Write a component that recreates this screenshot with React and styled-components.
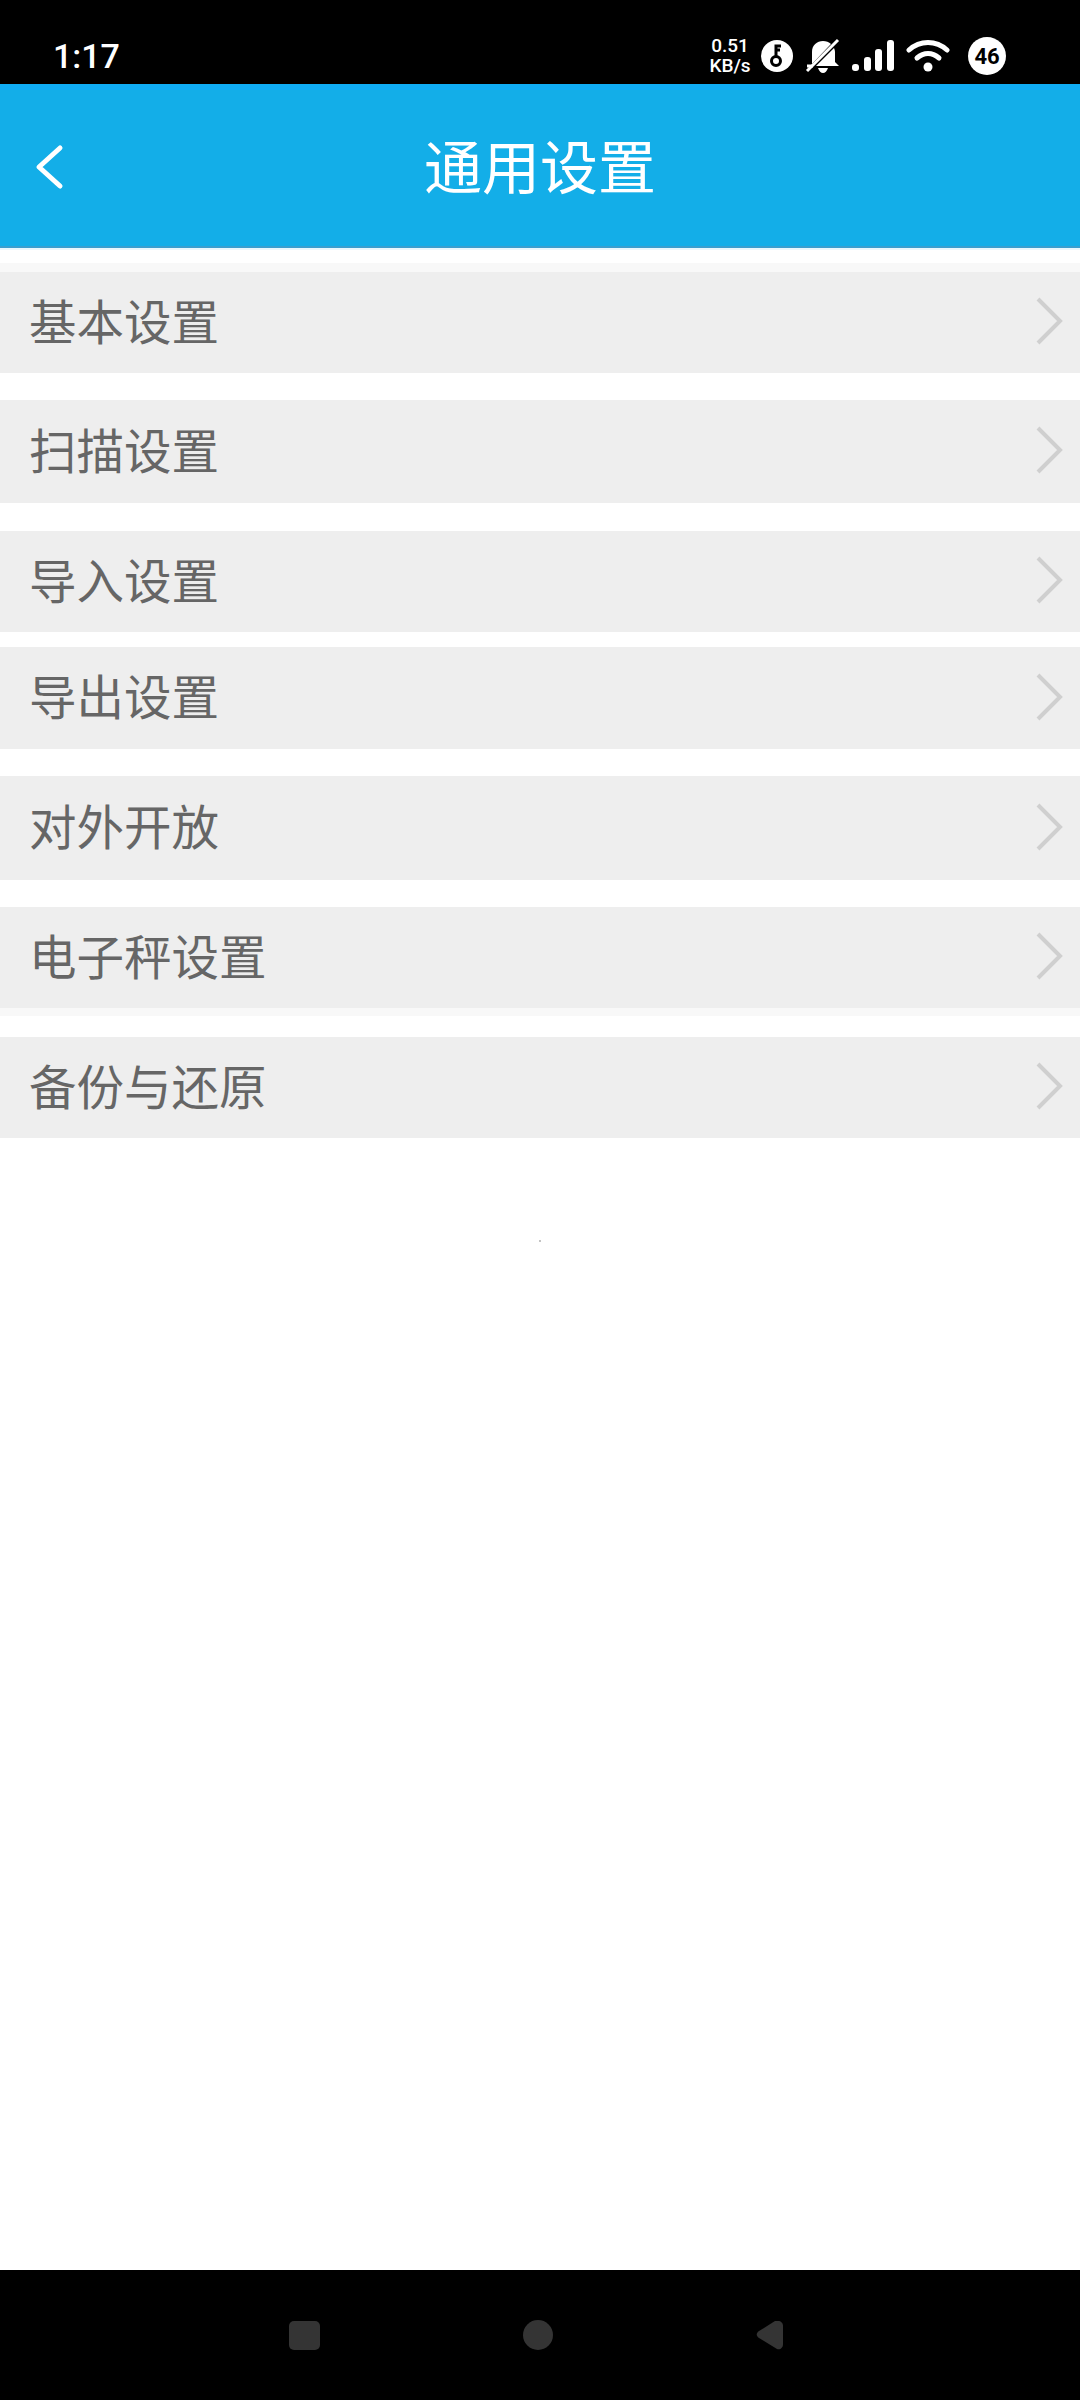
import React from 'react';
import styled, { createGlobalStyle } from 'styled-components';

const GlobalStyle = createGlobalStyle`
  html, body {
    margin: 0;
    padding: 0;
    background: #fff;
  }
  body {
    font-family: "Noto Sans CJK SC", Roboto, sans-serif;
  }
`;

const Page = styled.div`
  width: 1080px;
  height: 2400px;
  display: flex;
  flex-direction: column;
  background: #fff;
  overflow: hidden;
`;

const StatusBar = styled.div`
  height: 84px;
  flex: none;
  background: #000;
  color: #fff;
  display: flex;
  align-items: center;
  justify-content: space-between;
  padding: 28px 74px 0 53px;
  box-sizing: border-box;
  font-family: Roboto, sans-serif;
`;

const Clock = styled.span`
  font-size: 34px;
  font-weight: 500;
  line-height: 1;
`;

const StatusIcons = styled.div`
  display: flex;
  align-items: center;
  height: 44px;
`;

const NetSpeed = styled.div`
  font-size: 19px;
  font-weight: 500;
  line-height: 20px;
  text-align: center;
  width: 44px;
  margin-right: 9px;
`;

const BatteryBadge = styled.div`
  width: 38px;
  height: 38px;
  border-radius: 50%;
  background: #fff;
  color: #000;
  font-size: 22px;
  font-weight: 700;
  display: flex;
  align-items: center;
  justify-content: center;
  margin-left: 18px;
`;

const Glyph = styled.svg`
  display: block;
  flex: none;
  margin-left: ${({ $gap }) => $gap || 0}px;
`;

const Header = styled.header`
  height: 164px;
  flex: none;
  box-sizing: border-box;
  background: #13aee8;
  border-top: 6px solid #10aef6;
  border-bottom: 2px solid #3a9fcf;
  display: grid;
  grid-template-columns: 1fr auto 1fr;
  align-items: center;
  color: #fff;
`;

const BackButton = styled.div`
  padding-left: 32px;
`;

const Title = styled.h1`
  margin: 0 0 9px;
  font-size: 58px;
  font-weight: 400;
  line-height: 1;
`;

const List = styled.div`
  flex: 1;
  padding-top: 22px;
  border-top: 2px solid #e9f8fd;
  position: relative;
`;

const Row = styled.div`
  height: ${({ $height }) => $height}px;
  margin-top: ${({ $gap }) => $gap}px;
  background: #eeeeee;
  display: flex;
  align-items: center;
  justify-content: space-between;
  padding: 0 16px 3px 29px;
  box-sizing: border-box;
  box-shadow: ${({ $haze }) => $haze || 'none'};
`;

const RowLabel = styled.span`
  font-size: 47.5px;
  line-height: 1;
  color: #666666;
  margin-bottom: 3px;
`;

const Speck = styled.div`
  position: absolute;
  left: 539px;
  top: 990px;
  width: 2px;
  height: 2px;
  background: #c4c4c4;
`;

const NavBar = styled.div`
  height: 131px;
  flex: none;
  background: #000;
  display: flex;
  align-items: center;
  gap: 203px;
  padding-left: 289px;
  box-sizing: border-box;
  border-top: 1px solid #fff;
`;

const rows = [
  { label: '基本设置', gap: 0, height: 101, haze: '0 -9px 0 #f8f8f8' },
  { label: '扫描设置', gap: 27, height: 103 },
  { label: '导入设置', gap: 28, height: 101 },
  { label: '导出设置', gap: 15, height: 102 },
  { label: '对外开放', gap: 27, height: 104 },
  { label: '电子秤设置', gap: 27, height: 101, haze: '0 8px 0 #f8f8f8' },
  { label: '备份与还原', gap: 29, height: 101 },
];

const Chevron = () => (
  <Glyph width="30" height="50" viewBox="0 0 30 50" fill="none">
    <path d="M4 3l22 22L4 47" stroke="#cfcfcf" strokeWidth="4" />
  </Glyph>
);

const App = () => (
  <Page>
    <GlobalStyle />
    <StatusBar>
      <Clock>1:17</Clock>
      <StatusIcons>
        <NetSpeed>
          0.51
          <br />
          KB/s
        </NetSpeed>
        <Glyph width="32" height="32" viewBox="0 0 32 32">
          <circle cx="16" cy="16" r="16" fill="#fff" />
          <circle cx="15" cy="21" r="4.5" fill="none" stroke="#000" strokeWidth="3" />
          <path d="M15 17V6h5M15 10h4" fill="none" stroke="#000" strokeWidth="3" />
        </Glyph>
        <Glyph $gap={11} width="38" height="36" viewBox="0 0 38 36">
          <path d="M8 24V14C8 7 13 3 19 3c3 0 6 1 8 3L8 26zM12 28L30 10c.6 1.300 1 2.600 1 4v10l4 4zM14 30h10c-1 3-3 5-5 5s-4-2-5-5z" fill="#fff" />
          <path d="M3 33L34 2" stroke="#fff" strokeWidth="3" />
          <path d="M3 28h6" stroke="#fff" strokeWidth="3" />
        </Glyph>
        <Glyph $gap={10} width="42" height="32" viewBox="0 0 42 32">
          <rect x="0" y="24" width="7" height="7" rx="3" fill="#fff" />
          <rect x="12" y="17" width="7" height="14" rx="3" fill="#fff" />
          <rect x="23" y="9" width="7" height="22" rx="3" fill="#fff" />
          <rect x="35" y="0" width="7" height="31" rx="3" fill="#fff" />
        </Glyph>
        <Glyph $gap={12} width="44" height="34" viewBox="0 0 44 34">
          <path d="M3 11C14 1 30 1 41 11" fill="none" stroke="#fff" strokeWidth="5" strokeLinecap="round" />
          <path d="M11 19c7-6 15-6 22 0" fill="none" stroke="#fff" strokeWidth="5" strokeLinecap="round" />
          <circle cx="22" cy="28" r="4.500" fill="#fff" />
        </Glyph>
        <BatteryBadge>46</BatteryBadge>
      </StatusIcons>
    </StatusBar>
    <Header>
      <BackButton>
        <Glyph width="34" height="48" viewBox="0 0 34 48" fill="none">
          <path d="M28 4L7 23l21 19" stroke="#fff" strokeWidth="5" strokeLinecap="round" strokeLinejoin="round" />
        </Glyph>
      </BackButton>
      <Title>通用设置</Title>
      <div />
    </Header>
    <List>
      {rows.map((row) => (
        <Row key={row.label} $gap={row.gap} $height={row.height} $haze={row.haze}>
          <RowLabel>{row.label}</RowLabel>
          <Chevron />
        </Row>
      ))}
      <Speck />
    </List>
    <NavBar>
      <Glyph width="31" height="29" viewBox="0 0 31 29">
        <rect width="31" height="29" rx="5" fill="#343434" />
      </Glyph>
      <Glyph width="30" height="30" viewBox="0 0 30 30">
        <circle cx="15" cy="15" r="15" fill="#343434" />
      </Glyph>
      <Glyph width="27" height="30" viewBox="0 0 27 30">
        <path d="M22 1c3 0 5 2 5 5v18c0 4-3 6-6 5L3 18c-3-2-3-5 0-7L19 1z" fill="#343434" />
      </Glyph>
    </NavBar>
  </Page>
);

export default App;
